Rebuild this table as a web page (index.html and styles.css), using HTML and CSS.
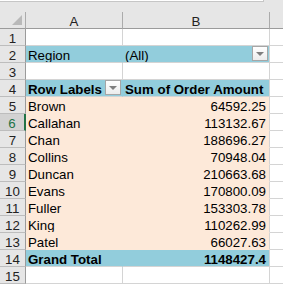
FILE: index.html
```html
<!DOCTYPE html>
<html lang="en">
  <head>
    <meta charset="UTF-8" />
    <title>Pivot - Order Amount</title>
    <link rel="stylesheet" href="styles.css">
  </head>
  <body>
    <div class="chrome">
      <div class="formula-bar"></div>
    </div>

    <div class="sheet">
      <!-- column headers -->
      <div class="hdr corner"><span class="corner-mark"></span></div>
      <div class="hdr col">A</div>
      <div class="hdr col">B</div>
      <div class="hdr col"></div>

      <div class="hdr row">1</div>
      <div class="cell"></div><div class="cell"></div><div class="cell"></div>

      <div class="hdr row">2</div>
      <div class="cell band">Region</div>
      <div class="cell band filter">(All)<span class="dd"></span></div>
      <div class="cell"></div>

      <div class="hdr row">3</div>
      <div class="cell"></div><div class="cell"></div><div class="cell"></div>

      <div class="hdr row">4</div>
      <div class="cell band bold filter">Row Labels<span class="dd"></span></div>
      <div class="cell band bold">Sum of Order Amount</div>
      <div class="cell"></div>

      <div class="hdr row">5</div>
      <div class="cell body">Brown</div><div class="cell body num">64592.25</div><div class="cell"></div>

      <div class="hdr row active">6</div>
      <div class="cell body">Callahan</div><div class="cell body num">113132.67</div><div class="cell"></div>

      <div class="hdr row">7</div>
      <div class="cell body">Chan</div><div class="cell body num">188696.27</div><div class="cell"></div>

      <div class="hdr row">8</div>
      <div class="cell body">Collins</div><div class="cell body num">70948.04</div><div class="cell"></div>

      <div class="hdr row">9</div>
      <div class="cell body">Duncan</div><div class="cell body num">210663.68</div><div class="cell"></div>

      <div class="hdr row">10</div>
      <div class="cell body">Evans</div><div class="cell body num">170800.09</div><div class="cell"></div>

      <div class="hdr row">11</div>
      <div class="cell body">Fuller</div><div class="cell body num">153303.78</div><div class="cell"></div>

      <div class="hdr row">12</div>
      <div class="cell body">King</div><div class="cell body num">110262.99</div><div class="cell"></div>

      <div class="hdr row">13</div>
      <div class="cell body">Patel</div><div class="cell body num">66027.63</div><div class="cell"></div>

      <div class="hdr row">14</div>
      <div class="cell band bold total">Grand Total</div>
      <div class="cell band bold total num">1148427.4</div>
      <div class="cell"></div>

      <div class="hdr row">15</div>
      <div class="cell"></div><div class="cell"></div><div class="cell"></div>
    </div>
  </body>
</html>
```

FILE: styles.css
```css
body {
  margin: 0;
  width: 283px;
  height: 284px;
  overflow: hidden;
  background-color: #fff;
  font-family: "Liberation Sans", Arial, sans-serif;
  font-size: 13.3px;
  color: #000;
}

.chrome {
  height: 12px;
  background-color: #e6e6e6;
}

.formula-bar {
  width: 263px;
  height: 1px;
  background-color: #fff;
  border-right: 1px solid #c6c6c6;
  border-bottom: 1px solid #c6c6c6;
}

.sheet {
  display: grid;
  grid-template-columns: 26px 97px 147px 14px;
  grid-auto-rows: 17px;
}

.sheet > div {
  box-sizing: border-box;
  border-right: 1px solid #d4d4d4;
  border-bottom: 1px solid #d4d4d4;
  line-height: 16px;
  padding: 2px 2px 0 2px;
  white-space: nowrap;
  overflow: hidden;
}

.hdr {
  background-color: #e6e6e6;
  color: #222;
  text-align: center;
}

.hdr.col {
  border-right-color: #ababab;
  border-bottom-color: #9b9b9b;
}

.hdr.corner {
  position: relative;
  border-right-color: #ababab;
  border-bottom-color: #9b9b9b;
}

.corner-mark {
  position: absolute;
  right: 3px;
  bottom: 3px;
  width: 0;
  height: 0;
  border-left: 10px solid transparent;
  border-bottom: 10px solid #b9b9b9;
}

.hdr.row {
  border-right-color: #9b9b9b;
  border-bottom-color: #bdbdbd;
}

.hdr.row.active {
  background-color: #d2d2d2;
  color: #217346;
  border-right: 2px solid #217346;
}

.band {
  background-color: #92cddc;
  border-right-color: #92cddc !important;
}

.band + .band {
  border-right-color: #d4d4d4 !important;
}

.bold {
  font-weight: bold;
}

.body {
  background-color: #fde9d9;
  border-color: #fde9d9 !important;
}

.body + .body {
  border-right-color: #d4d4d4 !important;
}

.num {
  text-align: right;
  padding-right: 3px !important;
}

.filter {
  display: flex;
  align-items: flex-start;
}

.dd {
  margin-left: auto;
  margin-right: -1px;
  margin-top: -2px;
  width: 16px;
  height: 15px;
  box-sizing: border-box;
  border: 1px solid #a6a6a6;
  background: linear-gradient(#ffffff, #ececec);
  display: flex;
  align-items: center;
  justify-content: center;
}

.dd::after {
  content: "";
  width: 0;
  height: 0;
  border-left: 4px solid transparent;
  border-right: 4px solid transparent;
  border-top: 4px solid #7f7f7f;
}
```
